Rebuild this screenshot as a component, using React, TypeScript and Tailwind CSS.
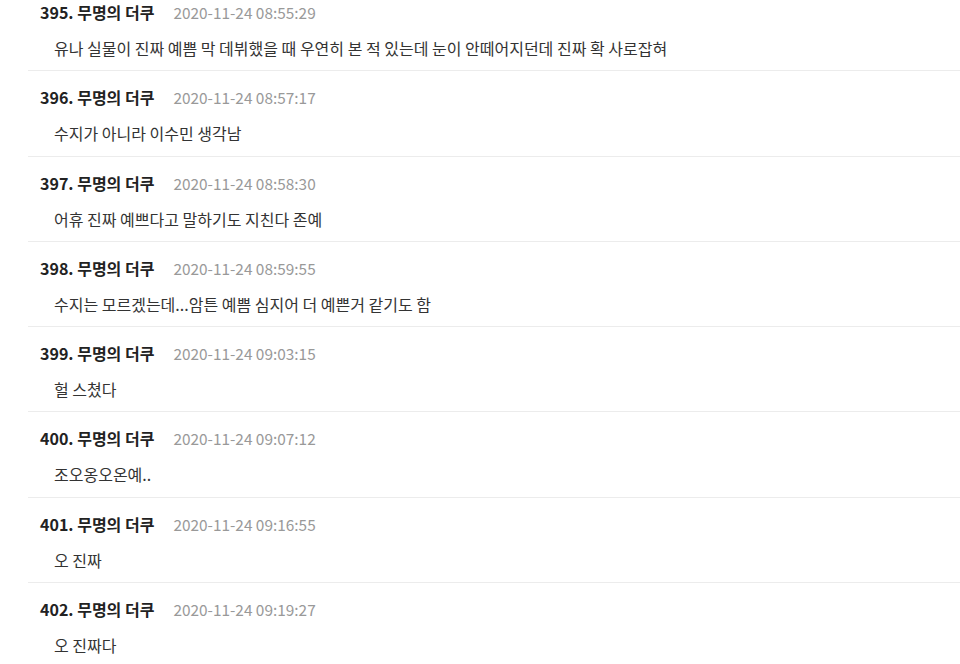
const comments = [
  { no: 395, time: "2020-11-24 08:55:29", body: "유나 실물이 진짜 예쁨 막 데뷔했을 때 우연히 본 적 있는데 눈이 안떼어지던데 진짜 확 사로잡혀" },
  { no: 396, time: "2020-11-24 08:57:17", body: "수지가 아니라 이수민 생각남" },
  { no: 397, time: "2020-11-24 08:58:30", body: "어휴 진짜 예쁘다고 말하기도 지친다 존예" },
  { no: 398, time: "2020-11-24 08:59:55", body: "수지는 모르겠는데...암튼 예쁨 심지어 더 예쁜거 같기도 함" },
  { no: 399, time: "2020-11-24 09:03:15", body: "헐 스쳤다" },
  { no: 400, time: "2020-11-24 09:07:12", body: "조오옹오온예.." },
  { no: 401, time: "2020-11-24 09:16:55", body: "오 진짜" },
  { no: 402, time: "2020-11-24 09:19:27", body: "오 진짜다" },
];

export default function App() {
  return (
    <div className="h-[664px] w-[960px] overflow-hidden bg-white font-['Noto_Sans_CJK_KR','Noto_Sans',sans-serif] text-[#333]">
      <ul className="-mt-[14px] pl-[28px]">
        {comments.map((c) => (
          <li
            key={c.no}
            className="border-b border-[#ececec] pb-[12.3px] pt-[16px]"
          >
            <div className="flex h-[20px] items-center pl-[12px] leading-[20px]">
              <span className="text-[16px] font-bold text-[#222]">
                {c.no}. 무명의 더쿠
              </span>
              <span className="ml-[19px] text-[15.4px] text-[#999]">{c.time}</span>
            </div>
            <p className="mt-[16px] h-[20px] pl-[26px] text-[16px] leading-[20px] text-[#333]">
              {c.body}
            </p>
          </li>
        ))}
      </ul>
    </div>
  );
}
